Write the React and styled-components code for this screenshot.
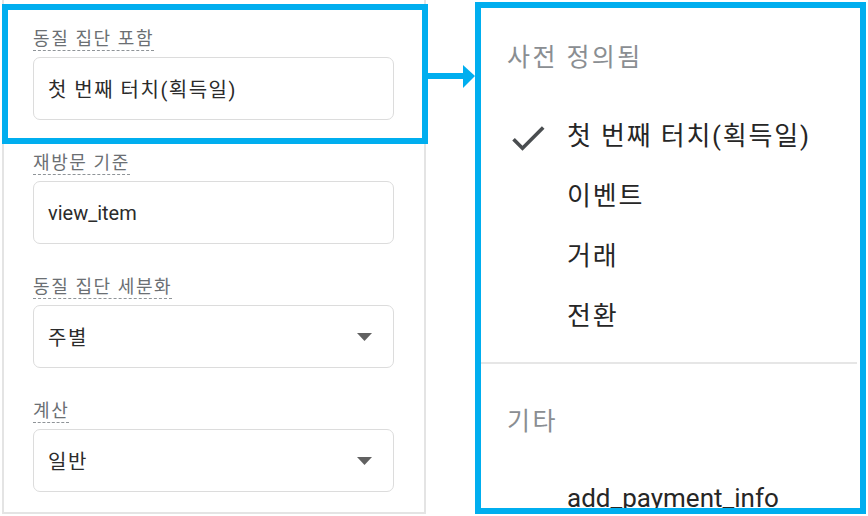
import React from "react";
import styled, { createGlobalStyle } from "styled-components";

const GlobalStyle = createGlobalStyle`
  body {
    margin: 0;
    background: #ffffff;
    font-family: Roboto, "Noto Sans CJK KR", sans-serif;
  }
`;

const BLUE = "#00aeef";

// 전체 화면
const Canvas = styled.div`
  position: relative;
  width: 868px;
  height: 516px;
  display: flex;
  align-items: flex-start;
  gap: 49px;
  overflow: hidden;
`;

// 왼쪽 설정 패널
const SettingsPanel = styled.div`
  box-sizing: border-box;
  width: 424px;
  margin-left: 2px;
  padding: 28px 31px 20px 29px;
  border: 2px solid #e4e4e4;
  border-top: none;
  display: flex;
  flex-direction: column;
  gap: 32px;
`;

const Field = styled.div`
  display: flex;
  flex-direction: column;
  align-items: flex-start;
`;

const Label = styled.span`
  display: inline-block;
  font-size: 18px;
  line-height: 22px;
  letter-spacing: 1.6px;
  color: #6b6f73;
  border-bottom: 1.5px dashed #8f9498;
  margin-bottom: 6px;
`;

const InputBox = styled.div`
  box-sizing: border-box;
  width: 361px;
  height: 63px;
  border: 1.5px solid #dcdcdc;
  border-radius: 7px;
  padding: 0 21px 0 14px;
  display: flex;
  align-items: center;
  justify-content: space-between;
  font-size: 20px;
  letter-spacing: ${(props) => (props.$ko ? "1.5px" : "0")};
  color: #2b2b2b;
`;

// 강조 표시 박스 (주석)
const Highlight = styled.div`
  position: absolute;
  left: 2px;
  top: 4px;
  width: 426px;
  height: 140px;
  box-sizing: border-box;
  border: 6px solid ${BLUE};
  pointer-events: none;
`;

const Connector = styled.svg`
  position: absolute;
  left: 426px;
  top: 64px;
`;

// 오른쪽 드롭다운 메뉴
const MenuFrame = styled.div`
  box-sizing: border-box;
  width: 391px;
  height: 512px;
  margin-top: 2px;
  border: 6px solid ${BLUE};
  overflow: hidden;
  padding-top: 20px;
`;

const GroupTitle = styled.div`
  height: 60px;
  line-height: 60px;
  padding-left: 26px;
  font-size: 25px;
  letter-spacing: 2.4px;
  color: #8a8e92;
  margin-top: ${(props) => props.top || 0}px;
`;

const MenuItem = styled.div`
  height: 60px;
  display: flex;
  align-items: center;
  padding-left: 25px;
  font-size: 26px;
  letter-spacing: ${(props) => (props.$ko ? "1.8px" : "0")};
  color: #262626;
  margin-top: ${(props) => props.top || 0}px;
`;

const CheckSlot = styled.div`
  width: 44px;
  height: 44px;
  margin-right: 17px;
  margin-top: 10px;
  flex-shrink: 0;
`;

const Divider = styled.div`
  height: 2px;
  background: #e6e6e6;
  margin: 19px 3px 0 0;
`;

const DropArrow = () => (
  <svg width="15" height="8" viewBox="0 0 15 8">
    <path d="M0 0h15L7.5 8z" fill="#616161" />
  </svg>
);

const Check = () => (
  <svg width="44" height="44" viewBox="0 0 24 24">
    <path
      d="M9 16.17L4.83 12l-1.42 1.41L9 19 21 7l-1.41-1.41z"
      fill="#4a4d50"
    />
  </svg>
);

const fields = [
  { label: "동질 집단 포함", value: "첫 번째 터치(획득일)", ko: true },
  { label: "재방문 기준", value: "view_item" },
  { label: "동질 집단 세분화", value: "주별", ko: true, select: true },
  { label: "계산", value: "일반", ko: true, select: true },
];

const predefined = ["첫 번째 터치(획득일)", "이벤트", "거래", "전환"];

const App = () => {
  return (
    <>
      <GlobalStyle />
      <Canvas>
        <SettingsPanel>
          {fields.map((f) => (
            <Field key={f.label}>
              <Label>{f.label}</Label>
              <InputBox $ko={f.ko}>
                <span>{f.value}</span>
                {f.select && <DropArrow />}
              </InputBox>
            </Field>
          ))}
        </SettingsPanel>

        <MenuFrame>
          <GroupTitle>사전 정의됨</GroupTitle>
          {predefined.map((item, i) => (
            <MenuItem key={item} $ko top={i === 0 ? 15 : 0}>
              <CheckSlot>{i === 0 && <Check />}</CheckSlot>
              {item}
            </MenuItem>
          ))}
          <Divider />
          <GroupTitle top={28}>기타</GroupTitle>
          <MenuItem top={16}>
            <CheckSlot />
            add_payment_info
          </MenuItem>
        </MenuFrame>

        <Highlight />
        <Connector width="50" height="26" viewBox="0 0 50 26">
          <rect x="0" y="9" width="38" height="6" fill={BLUE} />
          <path d="M37 1L49 12L37 24z" fill={BLUE} />
        </Connector>
      </Canvas>
    </>
  );
};

export default App;
